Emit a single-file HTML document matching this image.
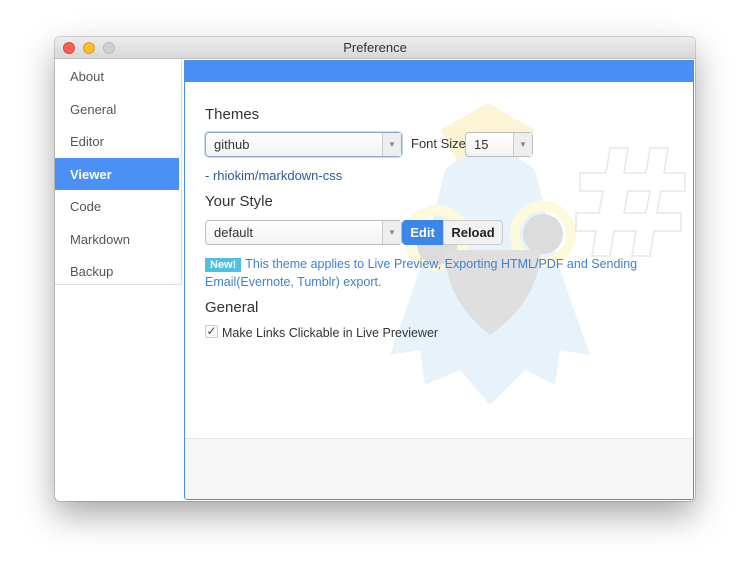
<!DOCTYPE html>
<html><head><meta charset="utf-8"><style>
*{box-sizing:border-box;margin:0;padding:0}
body{width:750px;height:574px;background:#fff;font-family:"Liberation Sans","DejaVu Sans",sans-serif;position:relative;overflow:hidden}
.win{position:absolute;left:55px;top:37px;width:640px;height:464px;background:#fff;border-radius:5px;box-shadow:0 14px 34px rgba(0,0,0,.35),0 0 0 1px rgba(0,0,0,.15);overflow:hidden}
.title{height:22px;background:linear-gradient(#ececec,#d8d8d8);border-bottom:1px solid #c4c4c4;text-align:center;font-size:13px;line-height:22px;color:#333}
.dot{position:absolute;top:5px;width:12px;height:12px;border-radius:50%}
.side{position:absolute;left:0;top:22px;width:127px;height:226px;border-bottom:1px solid #ddd;border-right:1px solid #ddd}
.side div{height:32.5px;line-height:33px;padding-left:15px;font-size:13px;color:#555}
.side .sel{background:#4a90f5;color:#fff;font-weight:bold;margin-right:2px}
.panel{position:absolute;left:129px;top:23px;width:510px;height:440px;border:1px solid #4a90e2;border-radius:0 0 3px 3px;overflow:hidden}
.hdr{position:relative;height:21px;background:#4a8ff5}
.foot{position:absolute;left:0;right:0;bottom:0;height:61px;background:#f6f6f6;border-top:1px solid #e6e6e6}
.t{position:absolute;color:#333}
.sel1{position:absolute;height:25px;border:1px solid #bbb;border-radius:4px;background:linear-gradient(#fff,#f3f3f3);font-size:13px;line-height:23px;padding-left:8px;color:#333}
.sel1 .ar{position:absolute;right:0;top:0;width:19px;height:23px;border-left:1px solid #ccc;background:#eee;font-size:8px;color:#888;text-align:center;line-height:23px}
</style></head><body>
<div class="win">
<div class="title">Preference</div>
<div class="dot" style="left:8px;background:#fc5f57;border:1px solid #df4744"></div>
<div class="dot" style="left:28px;background:#fdbc2e;border:1px solid #de9f34"></div>
<div class="dot" style="left:48px;background:#cfcfcf;border:1px solid #bbb"></div>
<div class="side"><div style="margin-top:1px">About</div><div>General</div><div>Editor</div><div class="sel">Viewer</div><div>Code</div><div>Markdown</div><div>Backup</div></div>
<div class="panel">
<svg style="position:absolute;left:-185px;top:-61px" width="750" height="574">
<g opacity="0.2">
<polygon points="488,103 535,130 510,175 465,175 440,130" fill="#f3c530"/>
<path d="M445,170 Q490,130 535,170 L560,270 L590,355 L560,350 L555,385 L525,370 L490,405 L460,370 L425,385 L420,350 L390,355 L420,270 Z" fill="#8cc0ef"/>
<circle cx="543" cy="234" r="28" fill="none" stroke="#f8e850" stroke-width="10"/>
<circle cx="543" cy="234" r="20" fill="#555"/>
<circle cx="437" cy="238" r="28" fill="none" stroke="#f8e850" stroke-width="10"/>
<circle cx="437" cy="245" r="20" fill="#555"/>
<path d="M445,250 L540,250 Q540,300 490,335 Q445,300 445,250 Z" fill="#666"/>
</g>
<g opacity="0.35" fill="#fff" stroke="#bbb" stroke-width="1.5">
<path d="M610,148 h18 l-4,25 h22 l4,-25 h18 l-4,25 h21 v18 h-24 l-4,22 h24 v18 h-27 l-4,25 h-18 l4,-25 h-22 l-4,25 h-18 l4,-25 h-20 v-18 h23 l4,-22 h-23 v-18 h26 Z M628,191 l-4,22 h22 l4,-22 Z"/>
</g>
</svg>
<div class="hdr"></div>
<div class="t" style="left:20px;top:45px;font-size:15px">Themes</div>
<div class="sel1" style="left:20px;top:71px;width:197px;border-color:#8aa8d8;box-shadow:0 0 0 1px #cbdcf3">github<div class="ar">▼</div></div>
<div class="t" style="left:226px;top:75px;font-size:13px">Font Size</div>
<div class="sel1" style="left:280px;top:71px;width:68px">15<div class="ar">▼</div></div>
<div class="t" style="left:20px;top:107px;font-size:13px;color:#2a5aa0">- rhiokim/markdown-css</div>
<div class="t" style="left:20px;top:132px;font-size:15px">Your Style</div>
<div class="sel1" style="left:20px;top:159px;width:197px">default<div class="ar">▼</div></div>
<div style="position:absolute;left:217px;top:159px;width:41px;height:25px;background:#3c86ea;border-radius:4px 0 0 4px;color:#fff;font-size:13px;font-weight:bold;line-height:25px;text-align:center">Edit</div>
<div style="position:absolute;left:258px;top:159px;width:60px;height:25px;background:#f1f1f1;border:1px solid #ccc;border-radius:0 4px 4px 0;color:#222;font-size:13px;font-weight:bold;line-height:23px;text-align:center">Reload</div>
<div class="t" style="left:20px;top:195px;width:470px;font-size:12.5px;line-height:17px;color:#3f82d0"><span style="background:#4fc0df;color:#fff;font-weight:bold;font-size:11px;padding:1px 5px;margin-right:4px">New!</span>This theme applies to Live Preview, Exporting HTML/PDF and Sending Email(Evernote, Tumblr) export.</div>
<div class="t" style="left:20px;top:238px;font-size:15px">General</div>
<div style="position:absolute;left:20px;top:264px;width:13px;height:13px;border:1px solid #ccc;border-radius:2px;background:#fafafa;font-size:12px;line-height:11px;color:#444;text-align:center">✓</div>
<div class="t" style="left:37px;top:265px;font-size:12.5px">Make Links Clickable in Live Previewer</div>
<div class="foot"></div>
</div>
</div>
</body></html>
